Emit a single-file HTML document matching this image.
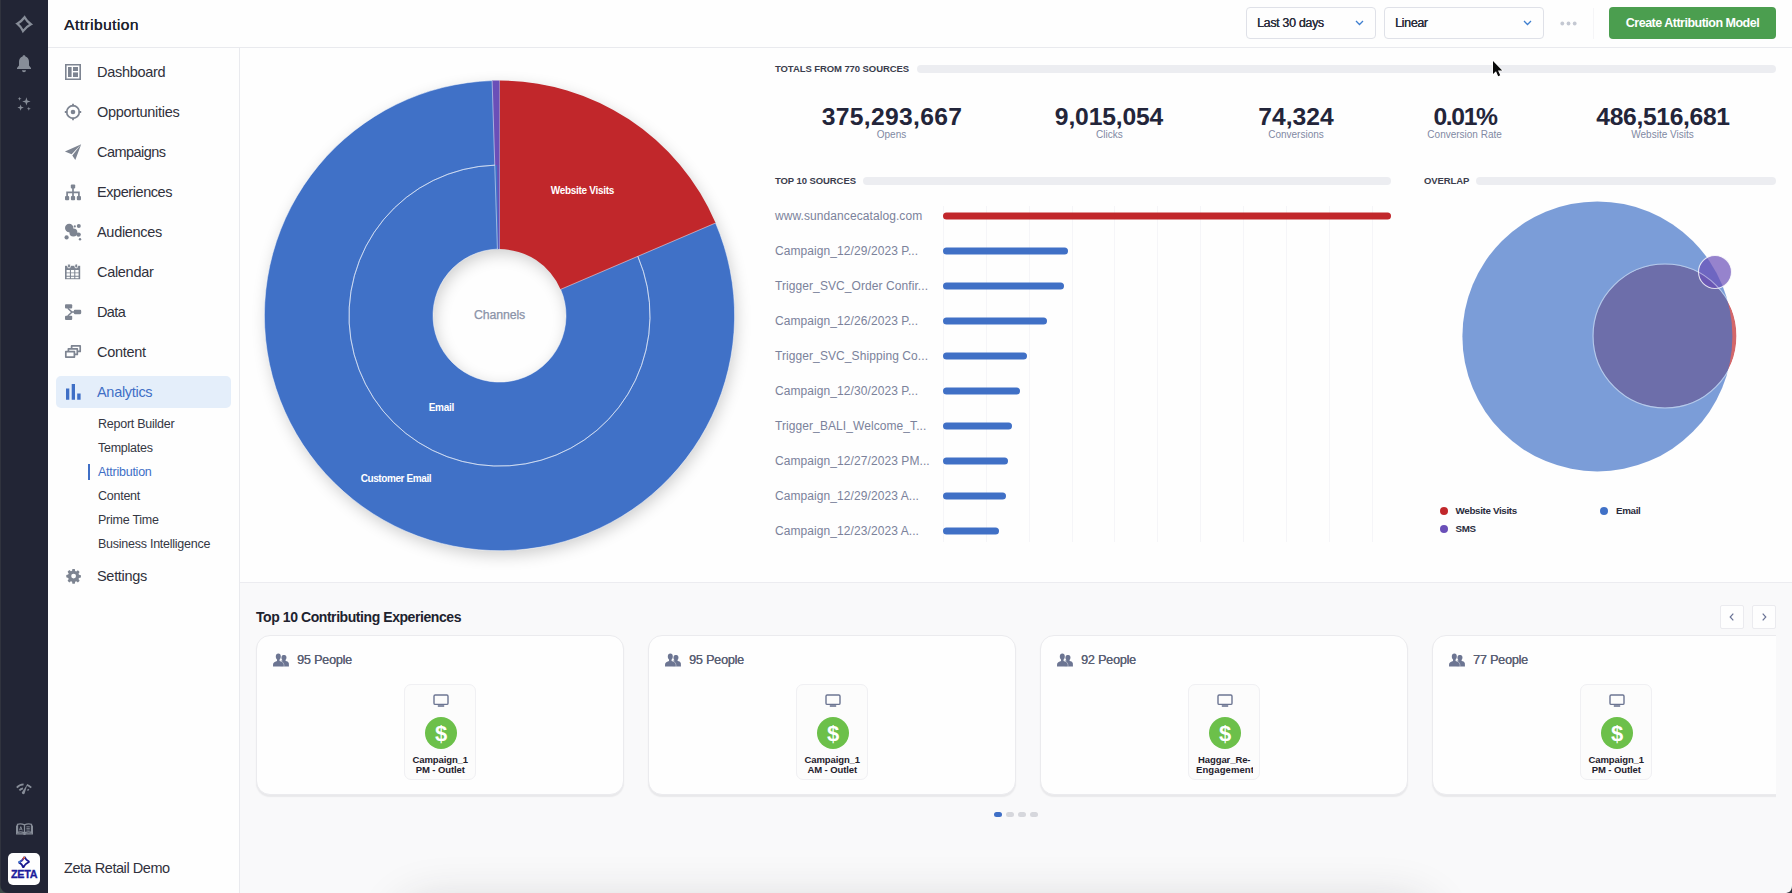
<!DOCTYPE html>
<html><head><meta charset="utf-8"><title>Attribution</title>
<style>
*{box-sizing:border-box;margin:0;padding:0}
html,body{width:1792px;height:893px;overflow:hidden;background:#fefefe;font-family:"Liberation Sans",sans-serif;color:#2a2c3a}
.abs{position:absolute}
#rail{position:absolute;left:0;top:0;width:48px;height:893px;background:#222535}
#nav{position:absolute;left:48px;top:0;width:192px;height:893px;background:#fefefe;border-right:1px solid #e9eaee}
#hdr{position:absolute;left:48px;top:0;width:1744px;height:48px;background:#fefefe;border-bottom:1px solid #e9eaee}
#title{position:absolute;left:16px;top:15px;font-size:15.500px;line-height:20px;color:#20222e;letter-spacing:0.450px;text-shadow:0.350px 0 0 #20222e}
.ni{margin-top:1px;position:absolute;left:49px;font-size:14.5px;line-height:20px;color:#30313c;white-space:nowrap;letter-spacing:-0.3px}
.si{margin-top:1px;position:absolute;left:50px;font-size:12.5px;line-height:16px;color:#353743;white-space:nowrap;letter-spacing:-0.25px}
.ico{margin-top:1px;position:absolute;left:16px;width:18px;height:18px}
#main{position:absolute;left:240px;top:48px;width:1552px;height:845px;background:#fefefe;overflow:hidden}
.sel{text-shadow:0.250px 0 0 #2b2d3b;position:absolute;top:7px;height:32px;border:1px solid #dfe1e8;border-radius:4px;background:#fefefe;font-size:12.5px;line-height:30px;padding-left:10px;color:#2b2d3b;letter-spacing:-0.35px}
.sec{position:absolute;font-size:9.5px;font-weight:bold;color:#3a3d4d;line-height:12px;white-space:nowrap;letter-spacing:-0.08px}
.bar{position:absolute;height:8px;border-radius:4px;background:#ecedf1}
.big{position:absolute;font-size:23.5px;font-weight:bold;line-height:28px;color:#23253a;white-space:nowrap;transform:translateX(-50%) scaleX(1.05);letter-spacing:0.3px}
.sm{position:absolute;font-size:10px;line-height:12px;color:#8189a3;white-space:nowrap;transform:translateX(-50%)}
.sl{position:absolute;left:775px;font-size:12px;line-height:14px;color:#7b829b;white-space:nowrap;letter-spacing:0.08px}
.sb{position:absolute;left:943px;height:7px;border-radius:4px;background:#4070c6;transform:translateY(-0.4px)}
.gl{position:absolute;top:206px;width:1px;height:336px;background:#f5f5f8}
#bot{position:absolute;left:240px;top:582px;width:1552px;height:311px;background:#f9f9fa;border-top:1px solid #ececf0;overflow:hidden}
.card{position:absolute;top:52px;width:368px;height:160px;background:#fefefe;border:1px solid #ebebee;border-radius:14px;box-shadow:0 2px 1.200px rgba(50,50,70,.08)}
.ppl{position:absolute;left:40px;top:16px;font-size:12.600px;line-height:16px;color:#5a6074;text-shadow:0.250px 0 0 #5a6074;white-space:nowrap;letter-spacing:-0.200px}
.box{position:absolute;left:147px;top:48px;width:72px;height:96px;border:1px solid #f0f0f3;border-radius:7px;background:#fcfcfc}
.gc{position:absolute;left:19.500px;top:32px;width:32px;height:32px;border-radius:16px;background:#6cc04a}
.bt{position:absolute;left:7px;width:56.500px;overflow:hidden;text-align:center;font-size:9.5px;font-weight:bold;line-height:11px;color:#1f212c;white-space:nowrap;letter-spacing:-0.1px}
</style></head><body>
<div id="rail">
<div class="abs" style="left:0;top:0;width:1px;height:893px;background:#30333e"></div>
<svg class="abs" style="left:14px;top:14px" width="20" height="20" viewBox="0 0 20 20"><path fill="none" stroke="#878d98" stroke-width="2.300" stroke-linejoin="miter" stroke-miterlimit="2" d="M10.60 3.30Q12.94 7.54 16.90 10.30Q12.24 12.86 9.00 17.10Q7.00 12.70 3.30 9.70Q7.65 7.35 10.60 3.30Z"/></svg>
<svg class="abs" style="left:15px;top:54px" width="18" height="20" viewBox="0 0 18 20"><path fill="#878d98" d="M9 1.200c.8 0 1.400.5 1.400 1.300 2.400.7 3.600 2.700 3.600 5.300v3.800l2 2.400v1H2v-1l2-2.400V7.800c0-2.600 1.200-4.600 3.600-5.300 0-.8.600-1.300 1.400-1.300zM7 16.200h4c0 1.200-.9 2-2 2s-2-.8-2-2z"/></svg>
<svg class="abs" style="left:15px;top:95px" width="18" height="18" viewBox="0 0 18 18"><path fill="#878d98" d="M11.400 2.200l1 3.200 3.200 1-3.200 1-1 3.200-1-3.200-3.200-1 3.200-1zM5.600 9.400l.8 2.400 2.400.8-2.400.8-.8 2.400-.8-2.400-2.400-.8 2.400-.8zM4.600 1.800l.5 1.500 1.500.5-1.500.5-.5 1.500-.5-1.500-1.500-.5 1.500-.5zM13.800 11.800l.5 1.500 1.500.5-1.500.5-.5 1.500-.5-1.500-1.500-.5 1.500-.5z"/></svg>
<svg class="abs" style="left:16px;top:783px" width="16" height="12" viewBox="0 0 16 12"><path fill="none" stroke="#878d98" stroke-width="1.800" d="M.8 4.600C2.600 2.600 5 1.500 7.600 1.400M10.800 1.800C12.400 2.300 13.900 3.200 15.200 4.600M3.400 7.400C4.400 6.300 5.600 5.600 7 5.300M11.600 6.400C12 6.700 12.300 7 12.600 7.400"/><path fill="#878d98" d="M11.400 1.200 8.600 10.400a1.500 1.500 0 0 1-2.800-.8z"/></svg>
<svg class="abs" style="left:15.500px;top:823px" width="17" height="12" viewBox="0 0 17 12"><path fill="none" stroke="#878d98" stroke-width="1.300" d="M1.500 1.300C3.800.7 6.300.9 8.500 1.900 10.700.9 13.200.7 15.500 1.300V9.300C13.200 8.700 10.700 8.900 8.500 9.900 6.300 8.900 3.800 8.700 1.500 9.300ZM8.500 1.900V9.900M.6 2.600V10.800H7C7.600 11.400 9.400 11.400 10 10.800H16.400V2.600"/><path fill="none" stroke="#878d98" stroke-width=".9" d="M3.400 7.400 4.800 3.600 6.200 7.400M3.900 6.200H5.700M10.400 3.800H13.800M10.400 5.400H13.800M10.400 7H13.800"/></svg>
<div class="abs" style="left:8px;top:853px;width:32px;height:32px;border-radius:5px;background:#fefefe"></div>
<svg class="abs" style="left:8px;top:853px" width="32" height="32" viewBox="0 0 32 32"><defs><linearGradient id="zg" gradientUnits="userSpaceOnUse" x1="10.500" y1="9" x2="17" y2="4"><stop offset="0" stop-color="#3d8fe0"/><stop offset=".45" stop-color="#3a3ab8"/><stop offset=".8" stop-color="#e04a38"/><stop offset="1" stop-color="#f0a030"/></linearGradient></defs><path fill="none" stroke="#17178f" stroke-width="1.750" stroke-miterlimit="2" d="M16.600 3.800Q17.700 7.300 21.400 8.700Q17.200 10.500 15.300 14.700Q14.200 10.800 10.700 9.400Q14.700 7.800 16.600 3.800Z"/><path fill="none" stroke="url(#zg)" stroke-width="1.750" d="M10.700 9.400Q14.700 7.800 16.600 3.800"/><text x="16.100" y="25.200" font-family="Liberation Sans, sans-serif" font-weight="bold" font-size="10.800" text-anchor="middle" fill="#1c1c9c" stroke="#1c1c9c" stroke-width=".3" letter-spacing="-0.300">ZETA</text></svg>
<svg class="abs" style="left:0;top:883px" width="10" height="10" viewBox="0 0 10 10"><path fill="#30333e" d="M0 0V10H10C4 10 0 6 0 0Z"/><path fill="#3d4b4a" d="M0 2V10H6C2.500 9 .5 6 0 2Z"/></svg>
</div>
<div id="nav">
<div class="abs" style="left:8px;top:376px;width:175px;height:32px;border-radius:5px;background:#e4eefa"></div>
<svg class="ico" style="top:62px" viewBox="0 0 18 18"><path fill="#7d8491" d="M1 1h16v16H1zM2.6 2.6v12.8h12.8V2.6z"/><rect x="4" y="4" width="3.6" height="10" fill="#7d8491"/><rect x="9" y="4" width="5" height="4" fill="#7d8491"/><rect x="9" y="9.4" width="5" height="4.6" fill="#7d8491"/></svg>
<div class="ni" style="top:61px">Dashboard</div>
<svg class="ico" style="top:102px" viewBox="0 0 18 18"><circle cx="9" cy="9" r="6.3" fill="none" stroke="#7d8491" stroke-width="1.7"/><circle cx="9" cy="9" r="2.3" fill="#7d8491"/><path stroke="#7d8491" stroke-width="1.8" d="M9 .8v2.6M9 14.6v2.6M.8 9h2.6M14.6 9h2.6"/></svg>
<div class="ni" style="top:101px">Opportunities</div>
<svg class="ico" style="top:142px" viewBox="0 0 18 18"><path fill="#7d8491" d="M.9 8.400 17.200 1.200 7.600 11.300ZM17.200 1.200 11.300 17.100 8.300 12.400Z"/></svg>
<div class="ni" style="top:141px;letter-spacing:-0.55px">Campaigns</div>
<svg class="ico" style="top:182px" viewBox="0 0 18 18"><rect x="6.800" y="1.400" width="4.400" height="4.200" rx="1" fill="#7d8491"/><rect x="1" y="13" width="4.200" height="4.200" rx="1" fill="#7d8491"/><rect x="6.900" y="13" width="4.200" height="4.200" rx="1" fill="#7d8491"/><rect x="12.800" y="13" width="4.200" height="4.200" rx="1" fill="#7d8491"/><path fill="none" stroke="#7d8491" stroke-width="1.700" d="M9 5v8.500M3.100 13.500V9.400h11.800V13.500"/></svg>
<div class="ni" style="top:181px;letter-spacing:-0.43px">Experiences</div>
<svg class="ico" style="top:222px" viewBox="0 0 18 18"><circle cx="5.2" cy="5" r="4.2" fill="#7d8491"/><circle cx="9.4" cy="9.6" r="4" fill="#7d8491"/><circle cx="14.6" cy="11.6" r="2.2" fill="#7d8491"/><circle cx="14.8" cy="3" r="2" fill="#7d8491"/><circle cx="2.6" cy="14.4" r="2.1" fill="#7d8491"/><circle cx="16" cy="16.2" r="1.2" fill="#7d8491"/><circle cx="10.8" cy="3.4" r="1.1" fill="#7d8491"/></svg>
<div class="ni" style="top:221px">Audiences</div>
<svg class="ico" style="top:262px" viewBox="0 0 18 18"><path fill="#7d8491" d="M1 2.800h15.200V16.200H1z"/><path fill="#fefefe" d="M2.6 6.9h3.300v2.5h-3.300zM2.6 10.3h3.300v2.5h-3.300zM2.6 13.7h3.300v1.6h-3.300zM6.95 6.9h3.300v2.5h-3.300zM6.95 10.3h3.300v2.5h-3.300zM6.95 13.7h3.300v1.6h-3.300zM11.3 6.9h3.300v2.5h-3.300zM11.3 10.3h3.300v2.5h-3.300zM11.3 13.7h3.300v1.6h-3.300z"/><rect x="3.600" y="0.900" width="2.800" height="3.900" rx="1.200" fill="#7d8491" stroke="#fefefe" stroke-width=".9"/><rect x="10.800" y="0.900" width="2.800" height="3.900" rx="1.200" fill="#7d8491" stroke="#fefefe" stroke-width=".9"/></svg>
<div class="ni" style="top:261px">Calendar</div>
<svg class="ico" style="top:302px" viewBox="0 0 18 18"><rect x="1" y="1.200" width="7.200" height="4.200" rx="1" fill="#7d8491"/><rect x="1" y="12.800" width="7.200" height="4.200" rx="1" fill="#7d8491"/><rect x="9.800" y="6.800" width="7.400" height="4.400" rx="1.100" fill="#7d8491"/><path fill="none" stroke="#7d8491" stroke-width="1.500" d="M3.800 5.200l4.200 3.900-4.200 3.900M7.800 9h3"/></svg>
<div class="ni" style="top:301px;letter-spacing:-0.6px">Data</div>
<svg class="ico" style="top:342px" viewBox="0 0 18 18"><path fill="none" stroke="#7d8491" stroke-width="1.700" stroke-linejoin="round" d="M1.800 8.600h8.600v5.500H1.800zM4.400 8V5.800h8.900v5.600H11M7.600 5V2.900h8.600v5.500H14"/></svg>
<div class="ni" style="top:341px">Content</div>
<svg class="ico" style="top:382px" viewBox="0 0 18 18"><path fill="#3f6fc6" d="M2 5.600h3.300v11.200H2zM7.700 1h3.300v15.800H7.700zM13.200 10.600h3.400v6.200h-3.400z"/></svg>
<div class="ni" style="top:381px;color:#3f6fc6">Analytics</div>
<svg class="ico" style="top:566px" viewBox="0 0 18 18"><g transform="translate(9.600 9.100) scale(.860) translate(-9 -9)"><path fill="#7d8491" fill-rule="evenodd" d="M7.6.8h2.8l.4 2.2 1.3.6 1.9-1.3 2 2-1.300 1.900.6 1.300 2.200.4v2.800l-2.200.4-.6 1.300 1.300 1.900-2 2-1.900-1.300-1.300.6-.4 2.200H7.600l-.4-2.200-1.300-.6-1.900 1.300-2-2 1.300-1.900-.6-1.300L.500 10.400V7.600l2.200-.4.6-1.300L2 4l2-2 1.900 1.300 1.300-.6zM9 6.200a2.800 2.800 0 1 0 0 5.600 2.800 2.800 0 0 0 0-5.600z"/></g></svg>
<div class="ni" style="top:565px">Settings</div>
<div class="si" style="top:415px">Report Builder</div>
<div class="si" style="top:439px">Templates</div>
<div class="si" style="top:463px;color:#3f6fc6">Attribution</div>
<div class="si" style="top:487px">Content</div>
<div class="si" style="top:511px">Prime Time</div>
<div class="si" style="top:535px">Business Intelligence</div>
<div class="abs" style="left:40px;top:464px;width:2px;height:16px;background:#3f6fc6"></div>
<div class="ni" style="left:16px;top:857px;letter-spacing:-0.450px">Zeta Retail Demo</div>
</div>
<div id="hdr"><div id="title">Attribution</div>
<div class="sel" style="left:1198px;width:130px">Last 30 days</div>
<div class="sel" style="left:1336px;width:160px">Linear</div>
<svg class="abs" style="left:1307px;top:20px" width="9" height="6" viewBox="0 0 9 6"><path fill="none" stroke="#3f7fd0" stroke-width="1.300" d="M1 1l3.500 3.500L8 1"/></svg>
<svg class="abs" style="left:1475px;top:20px" width="9" height="6" viewBox="0 0 9 6"><path fill="none" stroke="#3f7fd0" stroke-width="1.300" d="M1 1l3.500 3.500L8 1"/></svg>
<svg class="abs" style="left:1512px;top:21px" width="17" height="5" viewBox="0 0 17 5"><circle cx="2.300" cy="2.500" r="1.900" fill="#c4c8d2"/><circle cx="8.500" cy="2.500" r="1.900" fill="#c4c8d2"/><circle cx="14.700" cy="2.500" r="1.900" fill="#c4c8d2"/></svg>
<div class="abs" style="left:1545px;top:8px;width:1px;height:31px;background:#f5f5f7"></div>
<div class="abs" style="left:1561px;top:7px;width:167px;height:32px;border-radius:4px;background:#4b9e4f;color:#fff;font-size:12.500px;font-weight:bold;line-height:32px;text-align:center;letter-spacing:-0.500px">Create Attribution Model</div>
</div>
<div id="main">
<svg class="abs" style="left:0;top:0" width="540" height="540" viewBox="0 0 540 540">
<defs><filter id="ps" x="-10%" y="-10%" width="125%" height="125%"><feGaussianBlur in="SourceAlpha" stdDeviation="8"/><feOffset dx="2" dy="5"/><feComponentTransfer><feFuncA type="linear" slope="0.2"/></feComponentTransfer><feMerge><feMergeNode/><feMergeNode in="SourceGraphic"/></feMerge></filter></defs>
<path d="M25.200000000000017 267.6a234.29999999999998 234.29999999999998 0 1 0 468.59999999999997 0a234.29999999999998 234.29999999999998 0 1 0 -468.59999999999997 0ZM192.2 267.6a67.3 67.3 0 1 1 134.6 0a67.3 67.3 0 1 1 -134.6 0Z" fill="#4071c7" fill-rule="evenodd" filter="url(#ps)"/>
<path d="M475.43 174.61A235.1 235.1 0 1 1 252.53 32.60L257.53 201.13A66.5 66.5 0 1 0 320.58 241.30Z" fill="#4071c7"/>
<path d="M259.50 32.50A235.1 235.1 0 0 1 475.59 174.98L320.62 241.40A66.5 66.5 0 0 0 259.50 201.10Z" fill="#c1272b"/>
<path d="M252.12 32.62A235.1 235.1 0 0 1 259.50 32.50L259.50 117.10A150.5 150.5 0 0 0 254.77 117.17Z" fill="#6a4fb8"/>
<path d="M254.77 117.17A150.5 150.5 0 0 1 259.50 117.10L259.50 201.10A66.5 66.5 0 0 0 257.41 201.13Z" fill="#4071c7"/>
<path d="M257.14 117.12A150.5 150.5 0 0 1 259.50 117.10L259.50 201.10A66.5 66.5 0 0 0 258.46 201.11Z" fill="#6a4fb8"/>
<path d="M397.83 208.31A150.5 150.5 0 1 1 254.77 117.17L257.41 201.13A66.5 66.5 0 1 0 320.62 241.40Z" fill="none" stroke="#fff" stroke-opacity=".55" stroke-width=".9"/>
<path d="M475.59 174.98A235.1 235.1 0 1 1 252.12 32.62L254.77 117.17A150.5 150.5 0 1 0 397.83 208.31Z" fill="none" stroke="#fff" stroke-opacity=".55" stroke-width=".9"/>
<path d="M259.50 201.10L259.50 32.50" stroke="#fff" stroke-opacity=".4" stroke-width=".7"/>
<g font-family="Liberation Sans, sans-serif" font-weight="bold" font-size="10" fill="#fff" text-anchor="middle" letter-spacing="-0.3">
<text x="342.4" y="145.600">Website Visits</text>
<text x="201.3" y="363">Email</text>
<text x="155.900" y="434.300" letter-spacing="-0.4">Customer Email</text>
</g>
<text x="259.5" y="270.800" font-family="Liberation Sans, sans-serif" font-size="12.300" fill="#8b93a8" stroke="#8b93a8" stroke-width=".25" text-anchor="middle" letter-spacing="-0.100">Channels</text>
</svg>
<div class="sec" style="left:535px;top:15px">TOTALS FROM 770 SOURCES</div><div class="bar" style="left:677px;top:17px;width:859px"></div>
<div class="sec" style="left:535px;top:127px">TOP 10 SOURCES</div><div class="bar" style="left:623px;top:129px;width:528px"></div>
<div class="sec" style="left:1184px;top:127px">OVERLAP</div><div class="bar" style="left:1236px;top:129px;width:300px"></div>
<div class="big" style="left:651.5px;top:55px">375,293,667</div><div class="sm" style="left:651.5px;top:81px">Opens</div>
<div class="big" style="left:869.3px;top:55px;letter-spacing:-0.15px">9,015,054</div><div class="sm" style="left:869.3px;top:81px">Clicks</div>
<div class="big" style="left:1056px;top:55px;letter-spacing:0.0px">74,324</div><div class="sm" style="left:1056px;top:81px">Conversions</div>
<div class="big" style="left:1224.6px;top:55px;letter-spacing:-1.3px">0.01%</div><div class="sm" style="left:1224.6px;top:81px">Conversion Rate</div>
<div class="big" style="left:1422.5px;top:55px;letter-spacing:-0.33px">486,516,681</div><div class="sm" style="left:1422.5px;top:81px">Website Visits</div>
<div class="gl" style="left:702.7px;top:158px"></div><div class="gl" style="left:745.6px;top:158px"></div><div class="gl" style="left:788.6px;top:158px"></div><div class="gl" style="left:831.5px;top:158px"></div><div class="gl" style="left:874.4px;top:158px"></div><div class="gl" style="left:917.4px;top:158px"></div><div class="gl" style="left:960.3px;top:158px"></div><div class="gl" style="left:1003.2px;top:158px"></div><div class="gl" style="left:1046.1px;top:158px"></div><div class="gl" style="left:1089.1px;top:158px"></div><div class="gl" style="left:1132.0px;top:158px"></div>
<div class="sl" style="left:535px;top:161px">www.sundancecatalog.com</div><div class="sb" style="left:703px;top:164.5px;width:448.0px;background:#c1272b"></div>
<div class="sl" style="left:535px;top:196px">Campaign_12/29/2023 P...</div><div class="sb" style="left:703px;top:199.5px;width:125.0px"></div>
<div class="sl" style="left:535px;top:231px">Trigger_SVC_Order Confir...</div><div class="sb" style="left:703px;top:234.5px;width:121.0px"></div>
<div class="sl" style="left:535px;top:266px">Campaign_12/26/2023 P...</div><div class="sb" style="left:703px;top:269.5px;width:104.0px"></div>
<div class="sl" style="left:535px;top:301px">Trigger_SVC_Shipping Co...</div><div class="sb" style="left:703px;top:304.5px;width:83.5px"></div>
<div class="sl" style="left:535px;top:336px">Campaign_12/30/2023 P...</div><div class="sb" style="left:703px;top:339.5px;width:76.7px"></div>
<div class="sl" style="left:535px;top:371px">Trigger_BALI_Welcome_T...</div><div class="sb" style="left:703px;top:374.5px;width:69.0px"></div>
<div class="sl" style="left:535px;top:406px">Campaign_12/27/2023 PM...</div><div class="sb" style="left:703px;top:409.5px;width:64.6px"></div>
<div class="sl" style="left:535px;top:441px">Campaign_12/29/2023 A...</div><div class="sb" style="left:703px;top:444.5px;width:63.4px"></div>
<div class="sl" style="left:535px;top:476px">Campaign_12/23/2023 A...</div><div class="sb" style="left:703px;top:479.5px;width:55.7px"></div>
<svg class="abs" style="left:1200px;top:142px" width="320" height="300" viewBox="1440 190 320 300">
<circle cx="1665" cy="336" r="72" fill="#c1272b" fill-opacity=".7" stroke="#fff" stroke-width="1.2"/>
<circle cx="1597.4" cy="336.4" r="135" fill="#4071c7" fill-opacity=".69"/>
<circle cx="1715" cy="272" r="16.5" fill="#6a4fb8" fill-opacity=".7"/>
<circle cx="1665" cy="336" r="72" fill="none" stroke="#fff" stroke-opacity=".45" stroke-width="1.1"/>
<circle cx="1715" cy="272" r="16.5" fill="none" stroke="#fff" stroke-opacity=".8" stroke-width="1.1"/>
</svg>
<div class="abs" style="left:1199.6px;top:458.6px;width:8px;height:8px;border-radius:4px;background:#c1272b"></div><div class="abs" style="left:1215.6px;top:456.6px;font-size:9.800px;font-weight:bold;line-height:12px;color:#2a2c3c;white-space:nowrap;letter-spacing:-0.350px">Website Visits</div>
<div class="abs" style="left:1360.0px;top:458.6px;width:8px;height:8px;border-radius:4px;background:#4071c7"></div><div class="abs" style="left:1376.0px;top:456.6px;font-size:9.800px;font-weight:bold;line-height:12px;color:#2a2c3c;white-space:nowrap;letter-spacing:-0.350px">Email</div>
<div class="abs" style="left:1199.6px;top:476.5px;width:8px;height:8px;border-radius:4px;background:#6a4fb8"></div><div class="abs" style="left:1215.6px;top:474.5px;font-size:9.800px;font-weight:bold;line-height:12px;color:#2a2c3c;white-space:nowrap;letter-spacing:-0.350px">SMS</div>
<svg class="abs" style="left:1252px;top:12px" width="12" height="18" viewBox="0 0 12 18"><path fill="#0a0a0a" stroke="#fff" stroke-width="1.300" paint-order="stroke" d="M1 1v13l3-2.800 2.200 5 2-.9-2.200-4.900H10.200z"/></svg>
</div>
<div id="bot">
<div class="abs" style="left:16px;top:25px;font-size:14px;font-weight:bold;line-height:18px;color:#20222e;white-space:nowrap;letter-spacing:-0.430px">Top 10 Contributing Experiences</div>
<div class="abs" style="left:1480px;top:22px;width:24px;height:24px;border:1px solid #ebebef;border-radius:2px;background:#fefefe"><svg class="abs" style="left:7px;top:6px" width="8" height="10" viewBox="0 0 8 10"><path fill="none" stroke="#6a7396" stroke-width="1.200" d="M5.300 1.600 2.200 5l3.100 3.400"/></svg></div>
<div class="abs" style="left:1512px;top:22px;width:24px;height:24px;border:1px solid #ebebef;border-radius:2px;background:#fefefe"><svg class="abs" style="left:7px;top:6px" width="8" height="10" viewBox="0 0 8 10"><path fill="none" stroke="#6a7396" stroke-width="1.200" d="M2.700 1.600 5.800 5 2.700 8.400"/></svg></div>
<div class="card" style="left:16px;top:52px">
<svg class="abs" style="left:16px;top:16.700px" width="16.200" height="14.200" viewBox="0 0 17 15"><path fill="#6c7592" d="M12 2.200c1.400 0 2.200 1.100 2.200 2.500 0 1.100-.4 2-1 2.600v1c1.500.5 3 1.200 3.400 2.200.2.500.2 1.500.2 3.700H8V8.300l1.800-.3V7.300c-.6-.6-1-1.500-1-2.600 0-1.400.8-2.500 2.200-2.500z"/><path fill="#6c7592" stroke="#fefefe" stroke-width=".9" paint-order="stroke" d="M5.600.6C7.300.6 8.200 2 8.200 3.700c0 1.400-.5 2.600-1.300 3.300v1.400c1.800.6 3.700 1.400 4.100 2.600.2.600.3 1.600.3 3.200H0c0-1.600 0-2.600.2-3.200.4-1.200 2.300-2 4-2.600V7C3.400 6.300 2.900 5.100 2.900 3.700 2.900 2 3.900.600 5.600.600z"/></svg>
<div class="ppl">95 People</div>
<div class="box"><svg class="abs" style="left:28px;top:9px" width="16" height="14" viewBox="0 0 16 14"><rect x="1" y="1" width="14" height="9.400" rx="1.200" fill="none" stroke="#6c7592" stroke-width="1.400"/><path fill="#6c7592" d="M4.800 11.200h6.400v1.600H4.800z"/></svg>
<div class="gc"><svg class="abs" style="left:0;top:0" width="32" height="32" viewBox="0 0 32 32"><text x="16" y="24" font-family="Liberation Sans, sans-serif" font-weight="bold" font-size="22" fill="#fff" text-anchor="middle" transform="translate(16 0) scale(1 1) translate(-16 0)">$</text></svg></div>
<div class="bt" style="top:69px">Campaign_1</div><div class="bt" style="top:79px">PM - Outlet</div></div>
</div>
<div class="card" style="left:408px;top:52px">
<svg class="abs" style="left:16px;top:16.700px" width="16.200" height="14.200" viewBox="0 0 17 15"><path fill="#6c7592" d="M12 2.200c1.400 0 2.200 1.100 2.200 2.500 0 1.100-.4 2-1 2.600v1c1.500.5 3 1.200 3.400 2.200.2.500.2 1.500.2 3.700H8V8.300l1.800-.3V7.300c-.6-.6-1-1.500-1-2.600 0-1.400.8-2.500 2.200-2.500z"/><path fill="#6c7592" stroke="#fefefe" stroke-width=".9" paint-order="stroke" d="M5.600.6C7.300.6 8.200 2 8.200 3.700c0 1.400-.5 2.600-1.300 3.300v1.400c1.800.6 3.700 1.400 4.100 2.600.2.600.3 1.600.3 3.200H0c0-1.600 0-2.600.2-3.200.4-1.200 2.300-2 4-2.600V7C3.400 6.300 2.900 5.100 2.900 3.700 2.900 2 3.900.600 5.600.600z"/></svg>
<div class="ppl">95 People</div>
<div class="box"><svg class="abs" style="left:28px;top:9px" width="16" height="14" viewBox="0 0 16 14"><rect x="1" y="1" width="14" height="9.400" rx="1.200" fill="none" stroke="#6c7592" stroke-width="1.400"/><path fill="#6c7592" d="M4.800 11.200h6.400v1.600H4.800z"/></svg>
<div class="gc"><svg class="abs" style="left:0;top:0" width="32" height="32" viewBox="0 0 32 32"><text x="16" y="24" font-family="Liberation Sans, sans-serif" font-weight="bold" font-size="22" fill="#fff" text-anchor="middle" transform="translate(16 0) scale(1 1) translate(-16 0)">$</text></svg></div>
<div class="bt" style="top:69px">Campaign_1</div><div class="bt" style="top:79px">AM - Outlet</div></div>
</div>
<div class="card" style="left:800px;top:52px">
<svg class="abs" style="left:16px;top:16.700px" width="16.200" height="14.200" viewBox="0 0 17 15"><path fill="#6c7592" d="M12 2.200c1.400 0 2.200 1.100 2.200 2.500 0 1.100-.4 2-1 2.600v1c1.500.5 3 1.200 3.400 2.200.2.500.2 1.500.2 3.700H8V8.300l1.800-.3V7.300c-.6-.6-1-1.500-1-2.600 0-1.400.8-2.500 2.200-2.500z"/><path fill="#6c7592" stroke="#fefefe" stroke-width=".9" paint-order="stroke" d="M5.600.6C7.300.6 8.200 2 8.200 3.700c0 1.400-.5 2.600-1.300 3.300v1.400c1.800.6 3.700 1.400 4.100 2.600.2.600.3 1.600.3 3.200H0c0-1.600 0-2.600.2-3.200.4-1.200 2.300-2 4-2.600V7C3.400 6.300 2.900 5.100 2.900 3.700 2.900 2 3.900.600 5.600.600z"/></svg>
<div class="ppl">92 People</div>
<div class="box"><svg class="abs" style="left:28px;top:9px" width="16" height="14" viewBox="0 0 16 14"><rect x="1" y="1" width="14" height="9.400" rx="1.200" fill="none" stroke="#6c7592" stroke-width="1.400"/><path fill="#6c7592" d="M4.800 11.200h6.400v1.600H4.800z"/></svg>
<div class="gc"><svg class="abs" style="left:0;top:0" width="32" height="32" viewBox="0 0 32 32"><text x="16" y="24" font-family="Liberation Sans, sans-serif" font-weight="bold" font-size="22" fill="#fff" text-anchor="middle" transform="translate(16 0) scale(1 1) translate(-16 0)">$</text></svg></div>
<div class="bt" style="top:69px">Haggar_Re-</div><div class="bt" style="top:79px;letter-spacing:0.1px;text-align:left">Engagement</div></div>
</div>
<div class="card" style="left:1192px;top:52px">
<svg class="abs" style="left:16px;top:16.700px" width="16.200" height="14.200" viewBox="0 0 17 15"><path fill="#6c7592" d="M12 2.200c1.400 0 2.200 1.100 2.200 2.500 0 1.100-.4 2-1 2.600v1c1.500.5 3 1.200 3.400 2.200.2.500.2 1.500.2 3.700H8V8.300l1.800-.3V7.300c-.6-.6-1-1.500-1-2.600 0-1.400.8-2.500 2.200-2.500z"/><path fill="#6c7592" stroke="#fefefe" stroke-width=".9" paint-order="stroke" d="M5.600.6C7.300.6 8.200 2 8.200 3.700c0 1.400-.5 2.600-1.300 3.300v1.400c1.800.6 3.700 1.400 4.100 2.600.2.600.3 1.600.3 3.200H0c0-1.600 0-2.600.2-3.200.4-1.200 2.300-2 4-2.600V7C3.400 6.300 2.900 5.100 2.900 3.700 2.900 2 3.900.600 5.600.600z"/></svg>
<div class="ppl">77 People</div>
<div class="box"><svg class="abs" style="left:28px;top:9px" width="16" height="14" viewBox="0 0 16 14"><rect x="1" y="1" width="14" height="9.400" rx="1.200" fill="none" stroke="#6c7592" stroke-width="1.400"/><path fill="#6c7592" d="M4.800 11.200h6.400v1.600H4.800z"/></svg>
<div class="gc"><svg class="abs" style="left:0;top:0" width="32" height="32" viewBox="0 0 32 32"><text x="16" y="24" font-family="Liberation Sans, sans-serif" font-weight="bold" font-size="22" fill="#fff" text-anchor="middle" transform="translate(16 0) scale(1 1) translate(-16 0)">$</text></svg></div>
<div class="bt" style="top:69px">Campaign_1</div><div class="bt" style="top:79px">PM - Outlet</div></div>
</div>
<div class="abs" style="left:1536px;top:47px;width:16px;height:175px;background:#f9f9fa"></div>
<div class="abs" style="left:754px;top:229px;width:8px;height:5px;border-radius:2.500px;background:#3f6fc6"></div><div class="abs" style="left:766px;top:229px;width:8px;height:5px;border-radius:2.500px;background:#d6d7dc"></div><div class="abs" style="left:778px;top:229px;width:8px;height:5px;border-radius:2.500px;background:#d6d7dc"></div><div class="abs" style="left:790px;top:229px;width:8px;height:5px;border-radius:2.500px;background:#d6d7dc"></div>
<div class="abs" style="left:172px;top:332px;width:1008px;height:40px;border-radius:20px;background:#888;box-shadow:0 0 46px 14px rgba(40,40,50,.17)"></div>
<svg class="abs" style="left:1542px;top:300px" width="10" height="10" viewBox="0 0 10 10"><path fill="#30323c" d="M10 2.500V10H2.500C7.500 10 10 7.500 10 2.500Z"/></svg>
</div>
</body></html>
